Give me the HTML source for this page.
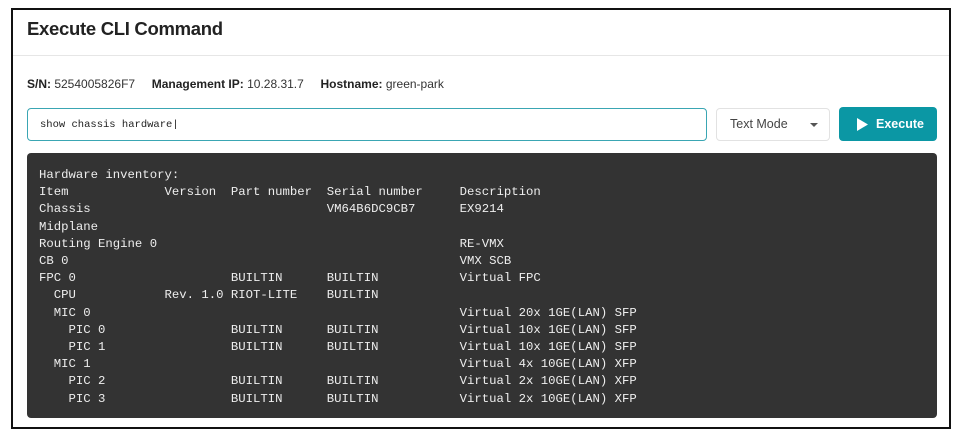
<!DOCTYPE html>
<html><head><style>
body{margin:0;background:#fff;width:974px;height:444px;overflow:hidden;font-family:"Liberation Sans",sans-serif;}
.box{position:absolute;left:11px;top:8px;width:936px;height:417px;border:2px solid #111;background:#fff;}
.hdr{position:absolute;left:0;top:0;right:0;height:45px;border-bottom:1px solid #e6e6e6;}
.hdr h1{margin:0;position:absolute;left:14px;top:8px;font-size:18.5px;font-weight:bold;color:#222;letter-spacing:-0.3px;}
.info{position:absolute;left:14px;top:67px;font-size:12px;color:#333;}
.info b{color:#222}
.inp{position:absolute;left:14px;top:98px;border:1px solid #3aa6b3;border-radius:4px;font-family:"Liberation Mono",monospace;font-size:10.5px;line-height:33px;padding-left:12px;box-sizing:border-box;width:680px;height:33px;color:#222}
.sel{position:absolute;left:703px;top:98px;width:114px;height:33px;border:1px solid #e2e2e2;border-radius:4px;box-sizing:border-box;font-size:12.5px;color:#444;line-height:31px;padding-left:13px;}
.sel:after{content:"";position:absolute;right:11px;top:14px;border:4px solid transparent;border-top:4px solid #555;}
.btn{position:absolute;left:826px;top:97px;width:98px;height:34px;background:#0b97a4;border-radius:4px;color:#fff;font-size:12.5px;font-weight:bold;line-height:34px;}
.btn svg{position:absolute;left:17px;top:11px}
.btn span{position:absolute;left:37px}
pre{position:absolute;left:14px;top:143px;width:910px;height:265px;margin:0;background:#333;border-radius:4px;color:#eee;font-family:"Liberation Mono",monospace;font-size:12.3px;line-height:17.2px;padding:14px 0 0 12px;box-sizing:border-box;}
</style></head><body>
<div class="box">
<div class="hdr"><h1>Execute CLI Command</h1></div>
<div class="info"><b>S/N:</b> 5254005826F7 &nbsp;&nbsp;&nbsp;&nbsp;<b>Management IP:</b> 10.28.31.7 &nbsp;&nbsp;&nbsp;&nbsp;<b>Hostname:</b> green-park</div>
<div class="inp">show chassis hardware|</div>
<div class="sel">Text Mode</div>
<div class="btn"><svg width="12" height="13" viewBox="0 0 12 13"><path d="M1 0L12 6.5L1 13Z" fill="#fff"/></svg><span>Execute</span></div>
<pre>Hardware inventory:
Item             Version  Part number  Serial number     Description
Chassis                                VM64B6DC9CB7      EX9214
Midplane
Routing Engine 0                                         RE-VMX
CB 0                                                     VMX SCB
FPC 0                     BUILTIN      BUILTIN           Virtual FPC
  CPU            Rev. 1.0 RIOT-LITE    BUILTIN
  MIC 0                                                  Virtual 20x 1GE(LAN) SFP
    PIC 0                 BUILTIN      BUILTIN           Virtual 10x 1GE(LAN) SFP
    PIC 1                 BUILTIN      BUILTIN           Virtual 10x 1GE(LAN) SFP
  MIC 1                                                  Virtual 4x 10GE(LAN) XFP
    PIC 2                 BUILTIN      BUILTIN           Virtual 2x 10GE(LAN) XFP
    PIC 3                 BUILTIN      BUILTIN           Virtual 2x 10GE(LAN) XFP</pre>
</div>
</body></html>
